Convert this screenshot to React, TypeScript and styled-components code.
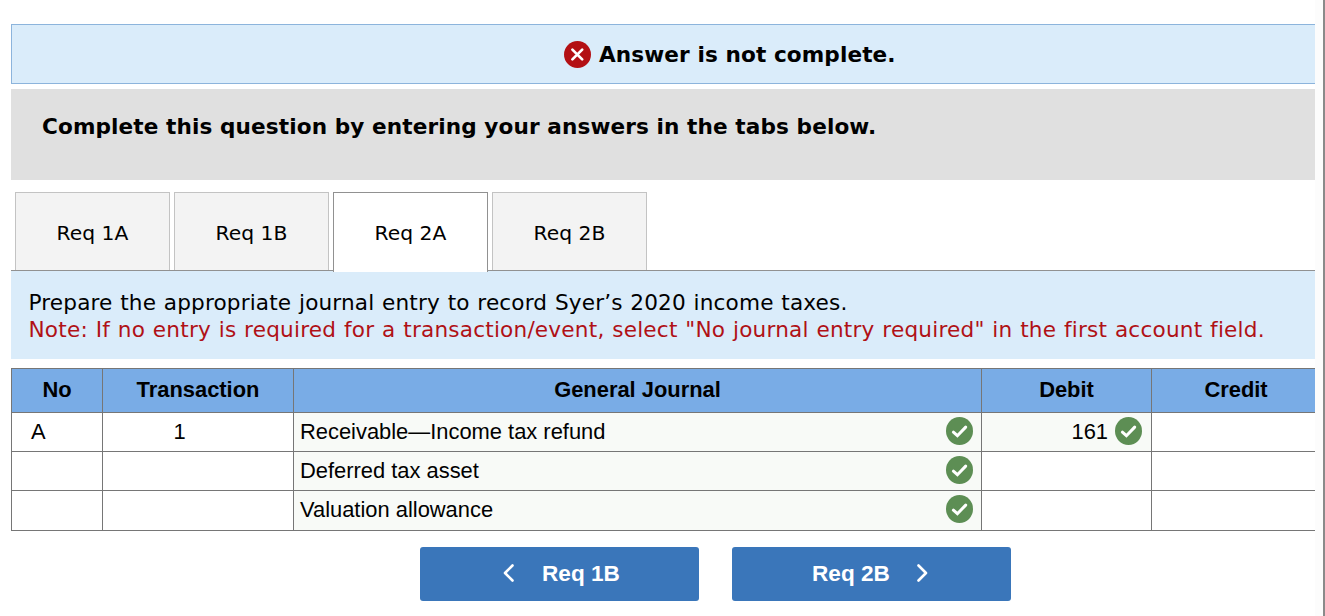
import styled, { createGlobalStyle } from 'styled-components';

const VERDANA = `Verdana, 'DejaVu Sans', sans-serif`;
const ARIAL = `Arial, 'Liberation Sans', sans-serif`;

const GlobalStyle = createGlobalStyle`
    * {
        box-sizing: border-box;
    }

    body {
        margin: 0;
        background: #fff;
        color: #000;
        overflow: hidden;
    }
`;

const Page = styled.div`
    display: flex;
    height: 616px;
`;

const Content = styled.main`
    width: 1315px;
    padding: 24px 0 0 11px;
    overflow: hidden;
`;

const Gutter = styled.div`
    flex: 1;
    background: #fcfcfc;
    border-right: 2px solid #8a8a8a;
`;

const StatusBar = styled.div`
    display: flex;
    align-items: center;
    height: 60px;
    padding-left: 552px;
    gap: 8px;
    background: #daecfa;
    border: 1px solid #8cb4dc;
    border-right: 0;
    font: bold 21.6px ${VERDANA};
    letter-spacing: 0.1px;

    svg {
        flex: none;
    }
`;

const Instruction = styled.div`
    height: 91px;
    margin-top: 5px;
    padding: 24px 31px;
    background: #e0e0e0;
    font: bold 21.6px/28px ${VERDANA};
    letter-spacing: 0.1px;
    white-space: nowrap;
`;

const TabList = styled.div`
    display: flex;
    gap: 4px;
    height: 79px;
    margin-top: 12px;
    padding-left: 4px;
    border-bottom: 1px solid #919191;
`;

const Tab = styled.button<{ $active?: boolean }>`
    width: 155px;
    height: ${({ $active }) => ($active ? 80 : 78)}px;
    padding: ${({ $active }) => ($active ? '2px 0 2px' : '2px 0 0')};
    border: 1px solid ${({ $active }) => ($active ? '#919191' : '#c3c3c3')};
    border-bottom: 0;
    background: ${({ $active }) => ($active ? '#fff' : '#f3f3f3')};
    color: #000;
    font: 20.3px ${VERDANA};
    z-index: 1;
`;

const Prompt = styled.div`
    height: 88px;
    padding: 18px 17.5px 0;
    background: #daecfa;
    font: 21.6px/27px ${VERDANA};
    letter-spacing: 0.15px;
    word-spacing: 0.7px;
    white-space: nowrap;

    p {
        margin: 0;
    }
`;

const Note = styled.p`
    color: #b01116;
    letter-spacing: 0.2px;
`;

const Journal = styled.div`
    width: 1310px;
    margin-top: 9px;
    border: 1px solid #767676;
    border-width: 1px 0 0 1px;
    font: 21.9px ${ARIAL};
`;

const JournalRow = styled.div<{ $height: number }>`
    display: grid;
    grid-template-columns: 91px 191px 688px 170px 169px;
    height: ${({ $height }) => $height}px;
`;

const HeadCell = styled.div`
    display: flex;
    align-items: center;
    justify-content: center;
    padding-bottom: 2px;
    border: 1px solid #767676;
    border-width: 0 1px 1px 0;
    background: #79ace6;
    font-weight: bold;
`;

const Cell = styled.div<{ $align?: string; $graded?: boolean }>`
    display: flex;
    align-items: center;
    justify-content: ${({ $align }) => $align ?? 'flex-start'};
    padding: 0 8px 1px 6px;
    gap: 7px;
    border: 1px solid #767676;
    border-width: 0 1px 1px 0;
    background: ${({ $graded }) => ($graded ? '#f8faf7' : '#fff')};
    white-space: nowrap;

    svg {
        flex: none;
        margin-bottom: 2px;
    }
`;

const NoCell = styled(Cell)`
    padding-left: 19px;
`;

const TransactionCell = styled(Cell)`
    padding-right: 43px;
`;

const DebitCell = styled(Cell)`
    padding-right: 9px;
`;

const Nav = styled.div`
    display: flex;
    gap: 33px;
    margin-top: 16px;
    padding-left: 409px;
`;

const NavButton = styled.button<{ $shift: number; $gap: number }>`
    display: flex;
    align-items: center;
    gap: ${({ $gap }) => $gap}px;
    width: 279px;
    height: 54px;
    padding: 0 0 1px ${({ $shift }) => $shift}px;
    border: 0;
    border-radius: 3px;
    background: #3a76ba;
    color: #fff;
    font: bold 22.6px ${ARIAL};

    svg {
        margin-bottom: 1px;
    }
`;

const WrongIcon = () => (
    <svg width="27" height="27" viewBox="0 0 27 27">
        <circle cx="13.5" cy="13.5" r="13.5" fill="#b31014" />
        <path d="M8.4 8.6l9.8 9.8M18.2 8.6l-9.8 9.8" stroke="#fff" strokeWidth="2.7" strokeLinecap="round" />
    </svg>
);

const CorrectIcon = () => (
    <svg width="27" height="28" viewBox="0 0 27 28">
        <ellipse cx="13.5" cy="14" rx="13.5" ry="14" fill="#5d8e54" />
        <path d="M7.4 15.2l4 3.5 8.3-8.6" fill="none" stroke="#fff" strokeWidth="3" strokeLinecap="round" />
    </svg>
);

const Chevron = ({ d }: { d: string }) => (
    <svg width="12" height="18" viewBox="0 0 12 18">
        <path d={d} fill="none" stroke="#fff" strokeWidth="2.6" strokeLinecap="round" strokeLinejoin="round" />
    </svg>
);

const tabs = ['Req 1A', 'Req 1B', 'Req 2A', 'Req 2B'];
const columns = ['No', 'Transaction', 'General Journal', 'Debit', 'Credit'];
const entries = [
    { no: 'A', transaction: '1', account: 'Receivable—Income tax refund', debit: '161', height: 39 },
    { no: '', transaction: '', account: 'Deferred tax asset', debit: '', height: 39 },
    { no: '', transaction: '', account: 'Valuation allowance', debit: '', height: 40 },
];

export default function App() {
    return (
        <>
            <GlobalStyle />
            <Page>
                <Content>
                    <StatusBar>
                        <WrongIcon />
                        <span>Answer is not complete.</span>
                    </StatusBar>
                    <Instruction>Complete this question by entering your answers in the tabs below.</Instruction>
                    <TabList>
                        {tabs.map((tab) => (
                            <Tab key={tab} $active={tab === 'Req 2A'}>
                                {tab}
                            </Tab>
                        ))}
                    </TabList>
                    <Prompt>
                        <p>Prepare the appropriate journal entry to record Syer’s 2020 income taxes.</p>
                        <Note>
                            Note: If no entry is required for a transaction/event, select "No journal entry required"
                            in the first account field.
                        </Note>
                    </Prompt>
                    <Journal>
                        <JournalRow $height={44}>
                            {columns.map((column) => (
                                <HeadCell key={column}>{column}</HeadCell>
                            ))}
                        </JournalRow>
                        {entries.map((entry) => (
                            <JournalRow key={entry.account} $height={entry.height}>
                                <NoCell>{entry.no}</NoCell>
                                <TransactionCell $align="center">{entry.transaction}</TransactionCell>
                                <Cell $align="space-between" $graded>
                                    <span>{entry.account}</span>
                                    <CorrectIcon />
                                </Cell>
                                <DebitCell $align="flex-end" $graded={!!entry.debit}>
                                    {entry.debit}
                                    {entry.debit && <CorrectIcon />}
                                </DebitCell>
                                <Cell />
                            </JournalRow>
                        ))}
                    </Journal>
                    <Nav>
                        <NavButton $shift={83} $gap={27}>
                            <Chevron d="M9.5 1.5L2 9l7.5 7.5" />
                            Req 1B
                        </NavButton>
                        <NavButton $shift={80} $gap={26}>
                            Req 2B
                            <Chevron d="M2.5 1.5L10 9l-7.5 7.5" />
                        </NavButton>
                    </Nav>
                </Content>
                <Gutter />
            </Page>
        </>
    );
}
